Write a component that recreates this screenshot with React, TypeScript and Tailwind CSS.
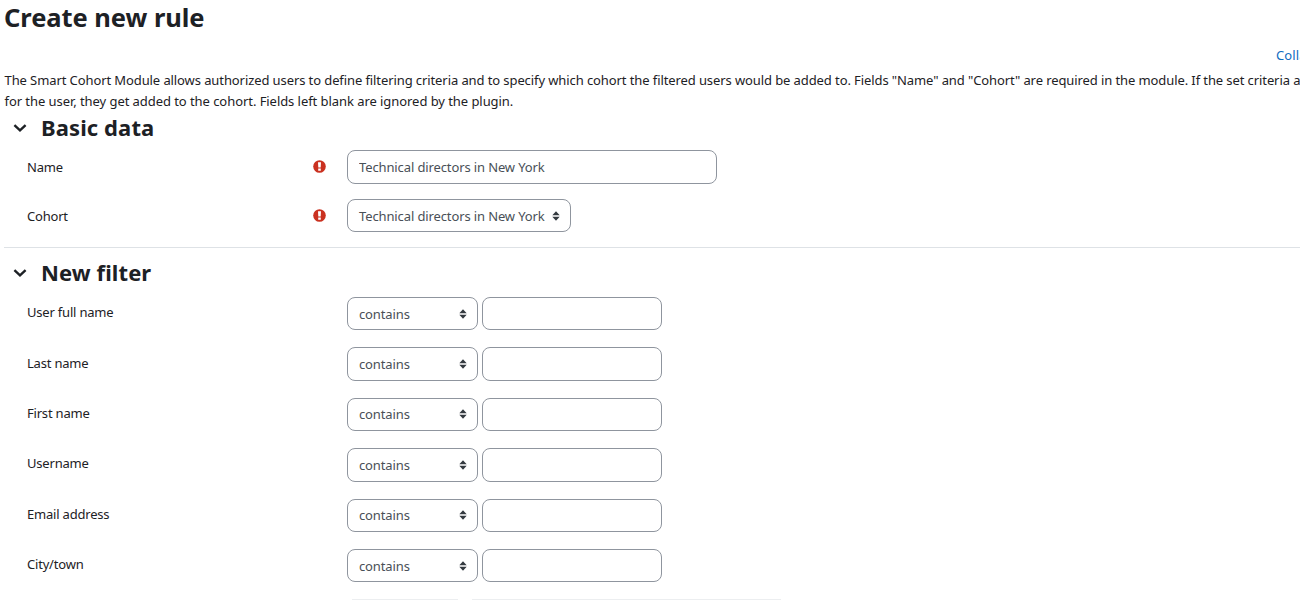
import React from "react";

const filters = ["User full name", "Last name", "First name", "Username", "Email address", "City/town"];

function Chevron() {
  return (
    <svg className="block h-[14px] w-[14px]" viewBox="0 0 14 14" fill="none" stroke="#1d2125" strokeWidth="2.4">
      <path d="M1.4 4.2 7 9.4l5.6-5.2" />
    </svg>
  );
}

function SortArrows() {
  return (
    <svg className="block h-[10px] w-[8px] shrink-0" viewBox="0 0 8 10" fill="#343a40">
      <path d="M0.3 4.2 4 0.2 7.7 4.2zM0.3 5.8h7.4L4 9.8z" />
    </svg>
  );
}

function Required() {
  return (
    <svg className="-mt-px block h-[13px] w-[13px]" viewBox="0 0 13 13">
      <circle cx="6.5" cy="6.5" r="6.3" fill="#ca3120" />
      <path d="M5 2.2h3l-.3 5.4H5.3zM5.2 8.5h2.6v2.2H5.2z" fill="#fff" />
    </svg>
  );
}

function SectionTitle({ children }: { children: React.ReactNode }) {
  return (
    <div className="flex h-[30px] items-center pl-[9px]">
      <Chevron />
      <h3 className="-mt-[3px] ml-[14px] text-[22px] leading-[30px] font-bold tracking-[0.1px]">{children}</h3>
    </div>
  );
}

function Select({ value, className }: { value: string; className: string }) {
  return (
    <button
      className={`flex items-center justify-between rounded-[8px] border border-[#8f959e] bg-white pr-[10px] pl-[11px] text-left tracking-[-0.12px] text-[#495057] ${className}`}
    >
      <span className="pt-px">{value}</span>
      <SortArrows />
    </button>
  );
}

export default function App() {
  return (
    <main className="h-[600px] w-[1300px] overflow-hidden bg-white pl-[4px] font-['Noto_Sans',sans-serif] text-[13px] leading-[21px] tracking-[-0.2px] whitespace-nowrap text-[#1d2125]">
      <h2 className="h-[45px] text-[25.5px] leading-[34px] font-bold tracking-[-0.05px]">Create new rule</h2>
      <div className="h-[25px] pl-[1272px]">
        <a className="tracking-[0.1px] text-[#0f6cbf]">Collapse all</a>
      </div>
      <p className="h-[43px] pl-[0.5px]">
        <span className="block tracking-[-0.095px]">
          The Smart Cohort Module allows authorized users to define filtering criteria and to specify which cohort the
          filtered users would be added to. Fields "Name" and "Cohort" are required in the module. If the set criteria are matched
        </span>
        <span className="block tracking-[-0.06px]">
          for the user, they get added to the cohort. Fields left blank are ignored by the plugin.
        </span>
      </p>
      <SectionTitle>Basic data</SectionTitle>
      <div className="mt-[7px] flex h-[34px] items-center pl-[23px]">
        <label className="w-[286px]">Name</label>
        <Required />
        <input
          className="ml-[21px] h-[34px] w-[370px] rounded-[8px] border border-[#8f959e] px-[11px] tracking-[-0.12px] text-[#495057] outline-none"
          defaultValue="Technical directors in New York"
        />
      </div>
      <div className="mt-[15px] flex h-[33px] items-center pl-[23px]">
        <label className="w-[286px] pt-px">Cohort</label>
        <Required />
        <Select value="Technical directors in New York" className="ml-[21px] h-[33px] w-[224px]" />
      </div>
      <div className="mt-[15px] h-px bg-[#dee2e6]" />
      <div className="mt-[10px]">
        <SectionTitle>New filter</SectionTitle>
      </div>
      <div className="mt-[9px]">
        {filters.map((name) => (
          <div key={name} className="flex h-[50.4px] items-start pl-[23px]">
            <label className="w-[320px] pt-[5.2px]">{name}</label>
            <Select value="contains" className="h-[33.4px] w-[131px]" />
            <input className="ml-[4px] h-[33.4px] w-[180px] rounded-[8px] border border-[#8f959e] px-[11px] outline-none" />
          </div>
        ))}
      </div>
      <div className="-mt-[0.4px] flex pl-[348px]">
        <div className="h-px w-[106px] bg-[#eceef0]" />
        <div className="ml-[14px] h-px w-[309px] bg-[#eceef0]" />
      </div>
    </main>
  );
}
